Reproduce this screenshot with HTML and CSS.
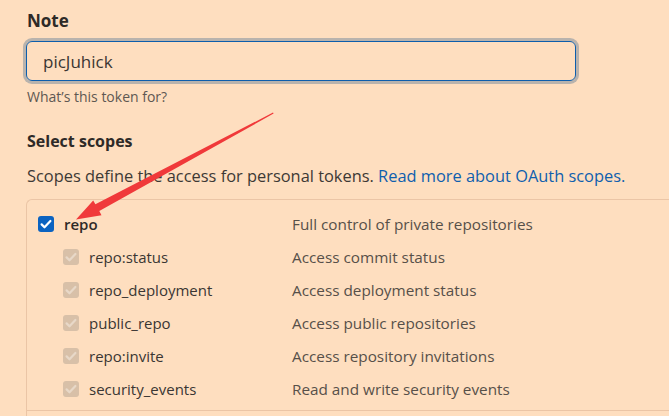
FILE: index.html
```html
<!DOCTYPE html>
<html>
<head>
<meta charset="utf-8">
<link rel="stylesheet" href="styles.css">
</head>
<body>
<div class="page">
  <div class="field">
    <label class="label">Note</label>
    <div class="input">picJuhick</div>
    <p class="hint">What’s this token for?</p>
  </div>
  <h3 class="heading">Select scopes</h3>
  <p class="desc">Scopes define the access for personal tokens. <a class="link">Read more about OAuth scopes.</a></p>
  <div class="scopes">
    <div class="group">
      <div class="row">
        <div class="name"><span class="cb on"><svg viewBox="0 0 16 16"><path d="M3.6 8.4l2.9 2.9 5.9-6.3" fill="none" stroke="#fff" stroke-width="2.2" stroke-linecap="round" stroke-linejoin="round"/></svg></span><b>repo</b></div>
        <div class="what">Full control of private repositories</div>
      </div>
      <div class="row sub">
        <div class="name"><span class="cb dis"><svg viewBox="0 0 16 16"><path d="M3.6 8.4l2.9 2.9 5.9-6.3" fill="none" stroke="#e8d8c8" stroke-width="2.2" stroke-linecap="round" stroke-linejoin="round"/></svg></span>repo:status</div>
        <div class="what">Access commit status</div>
      </div>
      <div class="row sub">
        <div class="name"><span class="cb dis"><svg viewBox="0 0 16 16"><path d="M3.6 8.4l2.9 2.9 5.9-6.3" fill="none" stroke="#e8d8c8" stroke-width="2.2" stroke-linecap="round" stroke-linejoin="round"/></svg></span>repo_deployment</div>
        <div class="what">Access deployment status</div>
      </div>
      <div class="row sub">
        <div class="name"><span class="cb dis"><svg viewBox="0 0 16 16"><path d="M3.6 8.4l2.9 2.9 5.9-6.3" fill="none" stroke="#e8d8c8" stroke-width="2.2" stroke-linecap="round" stroke-linejoin="round"/></svg></span>public_repo</div>
        <div class="what">Access public repositories</div>
      </div>
      <div class="row sub">
        <div class="name"><span class="cb dis"><svg viewBox="0 0 16 16"><path d="M3.6 8.4l2.9 2.9 5.9-6.3" fill="none" stroke="#e8d8c8" stroke-width="2.2" stroke-linecap="round" stroke-linejoin="round"/></svg></span>repo:invite</div>
        <div class="what">Access repository invitations</div>
      </div>
      <div class="row sub">
        <div class="name"><span class="cb dis"><svg viewBox="0 0 16 16"><path d="M3.6 8.4l2.9 2.9 5.9-6.3" fill="none" stroke="#e8d8c8" stroke-width="2.2" stroke-linecap="round" stroke-linejoin="round"/></svg></span>security_events</div>
        <div class="what">Read and write security events</div>
      </div>
    </div>
    <div class="group next"></div>
  </div>
</div>
<svg class="arrow" width="669" height="416" viewBox="0 0 669 416">
  <polygon fill="#f0393a" points="273,112.6 273.6,113.6 99.3,211 101.5,215.2 76,219.5 93.2,200.4 95.4,204.2"/>
</svg>
</body>
</html>
```
FILE: styles.css
```css
html, body {
  margin: 0;
  padding: 0;
  background: #fedebf;
  overflow: hidden;
  width: 669px;
  height: 416px;
}
body {
  font-family: "Open Sans", "Noto Sans", sans-serif;
  color: #333;
  position: relative;
}
.page {
  padding: 9px 0 0 26px;
}
.label {
  display: block;
  font-weight: 700;
  font-size: 17px;
  line-height: 24px;
  padding-left: 1px;
  color: #2e2a27;
}
.input {
  margin-top: 8px;
  height: 38px;
  border: 1px solid #0d5eac;
  border-radius: 6px;
  box-shadow: 0 0 0 3px #b9b3ad;
  box-sizing: content-box;
  padding: 0 0 0 16px;
  display: flex;
  align-items: center;
  font-size: 17px;
  color: #3a3633;
  width: 532px;
}
.hint {
  margin: 7px 0 0 1px;
  font-size: 14px;
  line-height: 18px;
  color: #5e5852;
}
.heading {
  margin: 23px 0 0 1px;
  font-size: 16px;
  line-height: 24px;
  font-weight: 700;
  color: #2e2a27;
}
.desc {
  margin: 10px 0 0 1px;
  font-size: 16.4px;
  line-height: 26px;
  color: #3d3935;
}
.link {
  color: #0f5fae;
}
.scopes {
  margin-top: 10px;
  width: 700px;
  border: 1px solid #ebc5a6;
  border-right: none;
  border-bottom: none;
  border-radius: 6px 0 0 0;
}
.group {
  padding: 7px 0 5px 0;
}
.group.next {
  border-top: 1px solid #ebc5a6;
  height: 40px;
}
.row {
  display: grid;
  grid-template-columns: 265px 1fr;
  height: 33px;
  align-items: center;
}
.name {
  display: flex;
  align-items: center;
  gap: 10px;
  padding-left: 11px;
  font-size: 15px;
  color: #3a3633;
}
.name b {
  font-weight: 600;
  color: #2e2a27;
}
.sub .name {
  padding-left: 36px;
}
.cb {
  width: 16px;
  height: 16px;
  border-radius: 3px;
  display: inline-flex;
  flex: none;
}
.cb svg {
  width: 16px;
  height: 16px;
}
.cb.on {
  background: #0b63c1;
}
.cb.dis {
  background: #d8c0a8;
}
.what {
  font-size: 15.3px;
  color: #575049;
}
.arrow {
  position: absolute;
  left: 0;
  top: 0;
  pointer-events: none;
}
```
